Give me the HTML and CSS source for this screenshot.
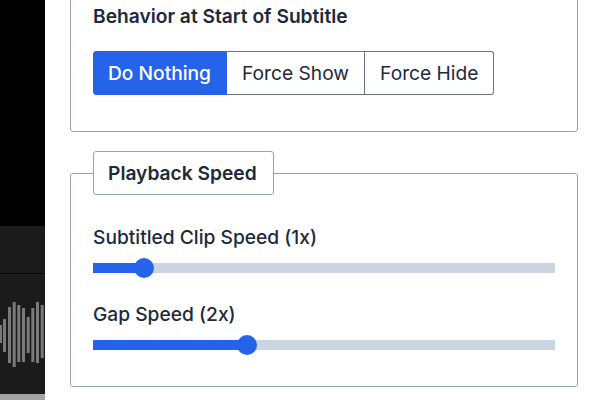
FILE: index.html
```html
<!DOCTYPE html>
<html lang="en">
<head>
<meta charset="utf-8">
<title>Subtitle settings</title>
<link rel="stylesheet" href="styles.css">
</head>
<body>
<div class="app">
  <aside class="side">
    <div class="video"></div>
    <div class="toolbar"></div>
    <div class="wave">
      <svg class="wave-svg" width="45" height="120" viewBox="0 0 45 120">
        <g fill="#7a7a7a">
          <rect x="-1" y="51" width="3" height="18"/>
          <rect x="3" y="45" width="3" height="33"/>
          <rect x="8" y="33" width="3" height="56"/>
          <rect x="12.7" y="28" width="3" height="65"/>
          <rect x="17.3" y="31" width="3" height="57"/>
          <rect x="22" y="34" width="3" height="54"/>
          <rect x="26.7" y="43" width="3" height="36"/>
          <rect x="31.3" y="34" width="3" height="54"/>
          <rect x="36" y="28" width="3" height="61"/>
          <rect x="40.7" y="31" width="3" height="53"/>
        </g>
      </svg>
    </div>
    <div class="scroll"></div>
  </aside>
  <main class="panel">
    <fieldset class="group group-first">
      <div class="field-title">Behavior at Start of Subtitle</div>
      <div class="seg">
        <button class="seg-btn active">Do Nothing</button>
        <button class="seg-btn">Force Show</button>
        <button class="seg-btn">Force Hide</button>
      </div>
    </fieldset>
    <fieldset class="group group-second">
      <legend class="legend">Playback Speed</legend>
      <div class="field">
        <label class="field-label">Subtitled Clip Speed (1x)</label>
        <div class="slider"><div class="track"><div class="fill" style="width:11.1%"><span class="thumb"></span></div></div></div>
      </div>
      <div class="field">
        <label class="field-label">Gap Speed (2x)</label>
        <div class="slider"><div class="track"><div class="fill" style="width:33.3%"><span class="thumb"></span></div></div></div>
      </div>
    </fieldset>
  </main>
</div>
</body>
</html>
```
FILE: styles.css
```css
* { box-sizing: border-box; }
html, body { margin: 0; padding: 0; background: #ffffff; }
body {
  font-family: Inter, "Liberation Sans", sans-serif;
  color: #1e293b;
  width: 600px;
  height: 400px;
  overflow: hidden;
}
.app { display: flex; height: 400px; }
.side {
  width: 45px;
  flex: none;
  display: flex;
  flex-direction: column;
  background: #1a1a1a;
}
.video { height: 226px; background: #000; }
.toolbar { height: 48px; background: #1b1b1b; border-bottom: 1px solid #050505; }
.wave { flex: 1; background: #1b1b1b; display: flex; align-items: center; overflow: hidden; }
.wave-svg { display: block; }
.scroll { height: 6px; background: #a3a3a3; }

.panel {
  flex: 1;
  padding: 0 22px 0 25px;
  overflow: hidden;
  background: #ffffff;
}
.group {
  margin: 0;
  min-width: 0;
  border: 1px solid #94a3b8;
  border-radius: 3px;
  padding: 0 22px;
}
.group-first {
  margin-top: -19px;
  padding-top: 20px;
  padding-bottom: 36px;
}
.group-second {
  margin-top: 19px;
  padding-top: 28px;
  padding-bottom: 31px;
}
.field-title {
  font-size: 19.2px;
  font-weight: 600;
  line-height: 28px;
  margin-bottom: 21px;
}
.seg { display: flex; }
.seg-btn {
  font-family: inherit;
  font-size: 19.2px;
  font-weight: 400;
  line-height: 42px;
  height: 44px;
  padding: 0 15px;
  margin: 0;
  background: #ffffff;
  color: #1e293b;
  border: 1px solid #64748b;
  border-left-width: 0;
  border-radius: 0;
}
.seg-btn:first-child { border-left-width: 1px; padding-left: 14px; border-radius: 3px 0 0 3px; }
.seg-btn:last-child { border-radius: 0 3px 3px 0; }
.seg-btn.active {
  background: #2563eb;
  color: #ffffff;
  font-weight: 500;
  border-color: #2563eb;
}
.legend {
  padding: 0 16px 0 14px;
  height: 44px;
  line-height: 42px;
  border: 1px solid #94a3b8;
  border-radius: 3px;
  font-size: 19.2px;
  font-weight: 600;
}
.field { display: flex; flex-direction: column; }
.field + .field { margin-top: 22px; }
.field-label {
  font-size: 19.2px;
  font-weight: 500;
  line-height: 28px;
  margin-bottom: 7px;
}
.slider { height: 20px; display: flex; align-items: center; }
.track {
  position: relative;
  width: 100%;
  height: 10px;
  background: #cbd5e1;
}
.fill { position: relative; height: 100%; background: #2563eb; }
.thumb {
  position: absolute;
  right: -10px;
  top: -5px;
  width: 20px;
  height: 20px;
  border-radius: 50%;
  background: #2563eb;
}
```
